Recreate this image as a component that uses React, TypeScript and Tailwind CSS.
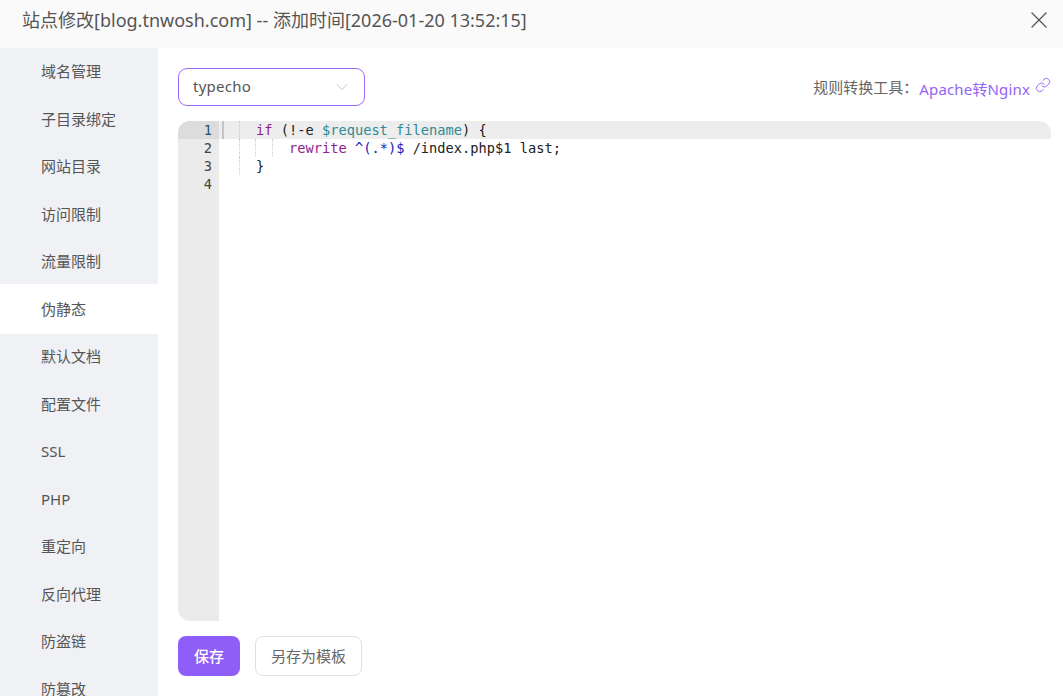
import { ChevronDown, Link, X } from "lucide-react";

const menuItems = [
  "域名管理",
  "子目录绑定",
  "网站目录",
  "访问限制",
  "流量限制",
  "伪静态",
  "默认文档",
  "配置文件",
  "SSL",
  "PHP",
  "重定向",
  "反向代理",
  "防盗链",
  "防篡改",
];

const sans = "font-['Noto_Sans','Noto_Sans_CJK_SC',sans-serif]";

function Guide() {
  return (
    <span className="inline-block h-[18px] w-[16.5px] shrink-0 border-r border-dotted border-[#c8c8c8]" />
  );
}

export default function App() {
  return (
    <div className={`flex h-[696px] w-[1063px] flex-col overflow-hidden bg-white ${sans}`}>
      <header className="flex h-12 shrink-0 items-center justify-between bg-[#fafafa] pb-2 pl-[22px] pr-[10px]">
        <h1 className="text-[18px] font-normal leading-none text-[#555]">
          站点修改[blog.tnwosh.com] -- 添加时间[2026-01-20 13:52:15]
        </h1>
        <X className="size-[28px] text-[#555]" strokeWidth={1.1} />
      </header>

      <div className="flex min-h-0 flex-1">
        <nav className="w-[158px] shrink-0 overflow-hidden bg-[#f0f1f5]">
          {menuItems.map((item) =>
            item === "伪静态" ? (
              <div
                key={item}
                className="-mb-px -mt-[1.5px] flex h-[50px] items-center bg-white pl-[41px] text-[15px] text-[#555]"
              >
                {item}
              </div>
            ) : (
              <div
                key={item}
                className="flex h-[47.5px] items-center pb-[1px] pl-[41px] text-[15px] text-[#555]"
              >
                {item}
              </div>
            ),
          )}
        </nav>

        <main className="flex min-w-0 flex-1 flex-col pb-5 pl-5 pr-3 pt-5">
          <div className="flex h-[38px] shrink-0 items-center justify-between">
            <div className="flex h-[38px] w-[187px] items-center justify-between rounded-[9px] border-[1.5px] border-[#9a6bf8] pb-[2px] pl-[14px] pr-[12px] text-[15px] tracking-[0.25px] text-[#555]">
              typecho
              <ChevronDown className="mt-[2px] size-[20px] text-[#bbb]" strokeWidth={1} />
            </div>
            <div className="flex items-center">
              <span className="mr-[1px] text-[15px] text-[#666]">规则转换工具：</span>
              <span className="mt-1 text-[15px] tracking-[0.15px] text-[#9163f7]">Apache转Nginx</span>
              <Link className="-mt-1 ml-[5px] size-[16px] text-[#9163f7]" strokeWidth={1.4} />
            </div>
          </div>

          <div className="mt-[15px] flex min-h-0 flex-1 overflow-hidden rounded-xl font-['DejaVu_Sans_Mono',monospace] text-[13.7px] leading-[18px]">
            <div className="w-[41px] shrink-0 bg-[#ebebeb] text-[#444]">
              <div className="bg-[#dcdcdc] pr-[7px] text-right text-[#1a4f7a]">1</div>
              <div className="pr-[7px] text-right">2</div>
              <div className="pr-[7px] text-right">3</div>
              <div className="pr-[7px] text-right">4</div>
            </div>
            <div className="min-w-0 flex-1 whitespace-pre text-[#222]">
              <div className="flex h-[18px] bg-[#ededed]">
                <span className="ml-[3px] h-[18px] w-[2px] shrink-0 bg-[#c4c4c4]" />
                <span className="-ml-[1px] flex">
                  <Guide />
                  <span className="w-[16.5px]" />
                </span>
                <span>
                  <span className="text-[#8f1d8f]">if</span> (!-e{" "}
                  <span className="text-[#2f8a96]">$request_filename</span>) {"{"}
                </span>
              </div>
              <div className="flex h-[18px] pl-[4px]">
                <Guide />
                <Guide />
                <Guide />
                <span className="w-[16.5px]" />
                <span>
                  <span className="text-[#8f1d8f]">rewrite</span>{" "}
                  <span className="text-[#1a1ab8]">^(.*)$</span> /index.php$1 last;
                </span>
              </div>
              <div className="flex h-[18px] pl-[4px]">
                <Guide />
                <span className="w-[16.5px]" />
                <span>{"}"}</span>
              </div>
            </div>
          </div>

          <div className="mt-[15px] flex shrink-0 gap-[15px]">
            <button className="h-10 w-[62px] rounded-lg bg-[#8f5df7] text-[15px] font-medium text-white">
              保存
            </button>
            <button className="h-10 w-[107px] rounded-lg border border-[#e0e0e8] bg-white text-[15px] text-[#666]">
              另存为模板
            </button>
          </div>
        </main>
      </div>
    </div>
  );
}
